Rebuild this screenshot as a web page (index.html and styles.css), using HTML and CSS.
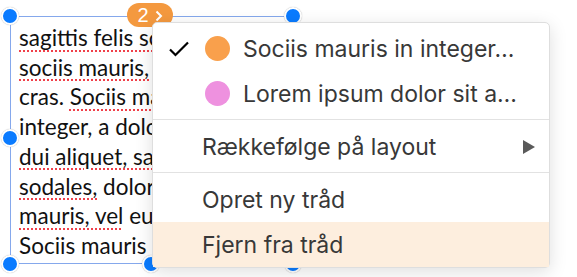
FILE: index.html
```html
<!DOCTYPE html>
<html lang="da">

<head>
    <meta charset="UTF-8">
    <meta name="viewport" content="width=device-width, initial-scale=1.0">
    <title>Tråd</title>
    <link rel="stylesheet" href="styles.css">
</head>

<body>
    <div class="scene">
        <div class="textbox">
            <div class="tekst">
                <p><span class="stavefejl">sagittis felis sociis</span></p>
                <p><span class="stavefejl">sociis mauris,</span> in</p>
                <p>cras. <span class="stavefejl">Sociis mauris</span></p>
                <p>integer, a dolor</p>
                <p><span class="stavefejl">dui aliquet, sa</span>pien</p>
                <p><span class="stavefejl">sodales,</span> dolor</p>
                <p><span class="stavefejl">mauris, vel</span> eu</p>
                <p>Sociis mauris</p>
            </div>
            <span class="handle h_tl"></span>
            <span class="handle h_tr"></span>
            <span class="handle h_ml"></span>
            <span class="handle h_bl"></span>
            <span class="handle h_bm"></span>
            <span class="handle h_br"></span>
            <div class="badge">
                <span class="tal">2</span>
                <svg width="8" height="12" viewBox="0 0 8 12"><polyline points="1.5,1.5 6,6 1.5,10.5" fill="none" stroke="#fff" stroke-width="2" /></svg>
            </div>
        </div>

        <div class="menu">
            <div class="punkt">
                <span class="flueben">
                    <svg width="20" height="16" viewBox="0 0 20 16"><polyline points="1,8.5 6.5,14 19,1.5" fill="none" stroke="#000" stroke-width="2.2" /></svg>
                </span>
                <span class="prik orange"></span>
                <span class="navn">Sociis mauris in integer…</span>
            </div>
            <div class="punkt">
                <span class="flueben"></span>
                <span class="prik pink"></span>
                <span class="navn">Lorem ipsum dolor sit a…</span>
            </div>
            <div class="skille"></div>
            <div class="punkt enkel">
                <span class="navn">Rækkefølge på layout</span>
                <span class="trekant"></span>
            </div>
            <div class="skille"></div>
            <div class="punkt enkel">
                <span class="navn">Opret ny tråd</span>
            </div>
            <div class="punkt enkel valgt">
                <span class="navn">Fjern fra tråd</span>
            </div>
        </div>
    </div>
</body>

</html>
```

FILE: styles.css
```css
* {
    margin: 0;
    padding: 0;
    box-sizing: border-box;
}

body {
    background: #fff;
    width: 577px;
    height: 277px;
    overflow: hidden;
}

.scene {
    position: relative;
    height: 277px;
    padding: 16px 0 0 10px;
}

.textbox {
    position: relative;
    width: 283px;
    height: 248px;
    border: 1px solid #85a8ec;
}

.tekst {
    height: 239px;
    overflow: hidden;
    padding: 6px 0 0 8px;
    font-family: "Lato", sans-serif;
    font-size: 22.5px;
    line-height: 29.7px;
    color: #111;
    white-space: nowrap;
}

.stavefejl {
    text-decoration: underline dotted #f0404a;
    text-decoration-thickness: 2px;
    text-underline-offset: 4px;
}

.handle {
    position: absolute;
    width: 18px;
    height: 18px;
    border-radius: 50%;
    background: #0a7bff;
    border: 2px solid #fff;
    box-shadow: 0 0 1px rgba(0, 0, 0, 0.35);
}

.h_tl { left: -10px; top: -10px; }
.h_tr { right: -10px; top: -10px; }
.h_ml { left: -10px; top: 112px; }
.h_bl { left: -10px; bottom: -10px; }
.h_bm { left: 131px; bottom: -10px; }
.h_br { right: -10px; bottom: -10px; }

.badge {
    position: absolute;
    left: 116px;
    top: -14px;
    width: 46px;
    height: 24px;
    border-radius: 12px;
    background: #f4993f;
    display: flex;
    align-items: center;
    justify-content: center;
    gap: 6px;
    padding-top: 1px;
    color: #fff;
    font-family: "Liberation Sans", sans-serif;
    font-size: 20px;
}

.menu {
    position: absolute;
    left: 152px;
    top: 22px;
    width: 398px;
    height: 246px;
    background: #fff;
    border: 1px solid #dedede;
    border-radius: 5px;
    box-shadow: 0 4px 18px rgba(0, 0, 0, 0.13);
    padding-top: 3px;
    font-family: "Inter", sans-serif;
    font-size: 23px;
    color: #383838;
}

.punkt {
    display: flex;
    align-items: center;
    height: 45px;
}

.flueben {
    width: 52px;
    padding-left: 16px;
    display: flex;
}

.prik {
    width: 25px;
    height: 25px;
    border-radius: 50%;
    margin-right: 13px;
}

.orange { background: #f9a04c; }
.pink { background: #ee91df; }

.enkel {
    padding-left: 49px;
    padding-right: 14px;
}

.trekant {
    margin-left: auto;
    width: 0;
    height: 0;
    border-top: 7px solid transparent;
    border-bottom: 7px solid transparent;
    border-left: 12px solid #5a5a5a;
}

.valgt {
    background: #fdeede;
}

.skille {
    height: 1px;
    background: #e2e2e2;
    margin: 3px 0 4px;
}
```
